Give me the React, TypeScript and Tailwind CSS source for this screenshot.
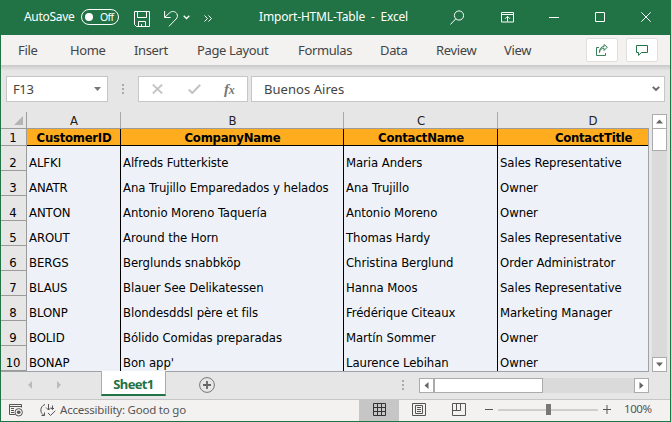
import type { ReactNode } from "react";

const ui = "font-['Noto_Sans','Open_Sans',sans-serif]";
const cellFont = "font-['DejaVu_Sans_Condensed','DejaVu_Sans',sans-serif] [font-stretch:condensed]";

const rows = [
  ["ALFKI", "Alfreds Futterkiste", "Maria Anders", "Sales Representative"],
  ["ANATR", "Ana Trujillo Emparedados y helados", "Ana Trujillo", "Owner"],
  ["ANTON", "Antonio Moreno Taquería", "Antonio Moreno", "Owner"],
  ["AROUT", "Around the Horn", "Thomas Hardy", "Sales Representative"],
  ["BERGS", "Berglunds snabbköp", "Christina Berglund", "Order Administrator"],
  ["BLAUS", "Blauer See Delikatessen", "Hanna Moos", "Sales Representative"],
  ["BLONP", "Blondesddsl père et fils", "Frédérique Citeaux", "Marketing Manager"],
  ["BOLID", "Bólido Comidas preparadas", "Martín Sommer", "Owner"],
  ["BONAP", "Bon app'", "Laurence Lebihan", "Owner"],
];

const columns = [
  { letter: "A", name: "CustomerID", width: "w-[94px]", pad: "pl-[1px]" },
  { letter: "B", name: "CompanyName", width: "w-[223px]", pad: "pl-[1px]" },
  { letter: "C", name: "ContactName", width: "w-[154px]", pad: "pl-[1px]" },
  { letter: "D", name: "ContactTitle", width: "w-[150px]", pad: "pl-[41px]" },
];

const menu = [
  { label: "File", width: "w-[52px]" },
  { label: "Home", width: "w-[64px]" },
  { label: "Insert", width: "w-[63px]" },
  { label: "Page Layout", width: "w-[101px]" },
  { label: "Formulas", width: "w-[82px]" },
  { label: "Data", width: "w-[56px]" },
  { label: "Review", width: "w-[68px]" },
  { label: "View", width: "w-[82px]" },
];

function Icon({ w, h, className = "", children }: { w: number; h: number; className?: string; children: ReactNode }) {
  return (
    <svg width={w} height={h} viewBox={`0 0 ${w} ${h}`} fill="none" stroke="currentColor" className={`block shrink-0 ${className}`}>
      {children}
    </svg>
  );
}

function TitleBar() {
  return (
    <div className={`flex h-[35px] items-start bg-[#217346] text-[12px] leading-[16px] text-white ${ui}`}>
      <span className="ml-[24px] mt-[9px] w-[57px] shrink-0 whitespace-nowrap tracking-[-0.3px]">AutoSave</span>
      <div className="mt-[9px] flex h-[16px] w-[38px] shrink-0 items-center rounded-full border border-white">
        <span className="ml-[3px] size-[8px] rounded-full bg-white" />
        <span className="ml-[7px] text-[10.5px] leading-[14px] tracking-[-0.7px]">Off</span>
      </div>
      <Icon w={16} h={16} className="ml-[15px] mt-[11px]">
        <path d="M.5.5h15v15H2.500l-2-2zM3.500.5v6h9v-6M4.500 15.500v-5h7v5M7.500 13v2.500" />
      </Icon>
      <Icon w={14} h={16} className="ml-[14px] mt-[11px]">
        <path d="M.6 0v6.500h6M.8 6.200 5.800 1.700C8.200-.3 11.400.4 12.700 2.500c1.300 2 .8 4-.6 5.500L5 15.300" />
      </Icon>
      <Icon w={7} h={5} className="ml-[5px] mt-[15px]"><path d="M.7.8 3.500 3.500 6.300.8" strokeWidth="1.300" /></Icon>
      <Icon w={8} h={7} className="ml-[14px] mt-[15px]"><path d="m.5.5 3 3-3 3M4.500.5l3 3-3 3" /></Icon>
      <span className="ml-[47px] mt-[9px] w-[191px] shrink-0 whitespace-pre tracking-[-0.17px]">Import-HTML-Table  -  Excel</span>
      <Icon w={14} h={15} className="mt-[10px]"><circle cx="9" cy="5.500" r="4.600" /><path d="M5.700 8.900.4 14.500" /></Icon>
      <Icon w={13} h={11} className="ml-[37px] mt-[12px]">
        <path d="M.5.5h12v9.500H.5zM.5 2.500h12M6.500 9.500v-5M4 6.800l2.500-2.500L9 6.800" />
      </Icon>
      <Icon w={10} h={11} className="ml-[35px] mt-[12px]"><path d="M0 5.500h10" /></Icon>
      <Icon w={10} h={10} className="ml-[36px] mt-[12px]"><path d="M.5.5h9v9h-9z" /></Icon>
      <Icon w={10} h={10} className="ml-[36px] mt-[12px]"><path d="m.3.300 9.400 9.400M9.700.3.3 9.700" /></Icon>
    </div>
  );
}

function MenuBar() {
  return (
    <div className={`flex h-[30px] items-start bg-[#f3f2f1] pl-[17px] text-[13px] leading-[18px] text-[#444] ${ui}`}>
      {menu.map((m) => (
        <span key={m.label} className={`mt-[6px] shrink-0 whitespace-nowrap tracking-[-0.36px] ${m.width}`}>{m.label}</span>
      ))}
      <button className="mt-[3px] flex h-[24px] w-[32px] shrink-0 items-center justify-center rounded-[2px] border border-[#e1dfdd] bg-white text-[#217346]">
        <Icon w={12} h={12}>
          <path d="M3 3.500H.5v8h9V9M3.500 8.500c.3-3 2-4.300 4.500-4.300V6.500l3.300-3.300L8 .500v2C5 2.600 3.300 5 3.500 8.500" strokeWidth=".9" />
        </Icon>
      </button>
      <button className="ml-[8px] mt-[3px] flex h-[24px] w-[32px] shrink-0 items-center justify-center rounded-[2px] border border-[#e1dfdd] bg-white text-[#217346]">
        <Icon w={12} h={11}><path d="M.5.5h11v7H5.500L2.500 10.300V7.500h-2z" /></Icon>
      </button>
    </div>
  );
}

function FormulaBar() {
  return (
    <div className={`flex h-[47px] items-start bg-gradient-to-b from-[#c9c9c9] via-[#e6e6e6] via-[12%] to-[#e6e6e6] pl-[5px] pt-[11px] text-[13px] text-[#444] ${ui}`}>
      <div className="flex h-[26px] w-[102px] shrink-0 items-center border border-[#c6c6c6] bg-white pl-[6px] pr-[6px]">
        <span className="pt-[2px] tracking-[-0.4px]">F13</span>
        <Icon w={7} h={4} className="ml-auto"><path d="M0 0h7L3.500 4z" fill="#777" stroke="none" /></Icon>
      </div>
      <Icon w={2} h={10} className="ml-[14px] mt-[8px]"><path d="M0 1h2M0 5h2M0 9h2" stroke="#aaa" strokeWidth="2" /></Icon>
      <div className="ml-[14px] flex h-[26px] w-[110px] shrink-0 items-center border border-[#c6c6c6] bg-white pl-[13px]">
        <Icon w={11} h={10}><path d="m.8.500 9.400 9M10.200.5.8 9.500" stroke="#c3c3c3" strokeWidth="1.800" /></Icon>
        <Icon w={13} h={10} className="ml-[25px]"><path d="m.8 5.500 3.500 3.500L12.200.8" stroke="#c3c3c3" strokeWidth="2" /></Icon>
        <span className="ml-[23px] font-['Liberation_Serif',serif] text-[15px] font-bold italic leading-[18px] tracking-[-0.3px] text-[#777]">f<span className="text-[12px]">x</span></span>
      </div>
      <div className="ml-[3px] flex h-[26px] w-[414px] shrink-0 items-center border border-[#c6c6c6] bg-white pl-[12px] pr-[4px]">
        <span className="pt-[2px] tracking-[0.05px]">Buenos Aires</span>
        <Icon w={8} h={6} className="ml-auto"><path d="m.8.800 3.200 3.200L7.200.8" stroke="#666" strokeWidth="1.900" /></Icon>
      </div>
    </div>
  );
}

function Grid() {
  return (
    <div className={`h-[260px] w-[648px] shrink-0 overflow-hidden border-b border-[#9fa3a8] text-[13px] leading-[14px] tracking-[-0.07px] text-black ${cellFont}`}>
      <div className="flex h-[17px] border-b border-[#9b9b9b]">
        <div className="flex w-[26px] shrink-0 items-end justify-end border-r border-[#9b9b9b] pb-[3px] pr-[3px]">
          <Icon w={9} h={9}><path d="M9 0v9H0z" fill="#b4b4b4" stroke="none" /></Icon>
        </div>
        {columns.map((c) => (
          <div key={c.letter} className={`shrink-0 border-r border-r-[#aaa] pl-[1px] pt-[2px] text-center text-[#222] last:border-r-0 last:pl-[40px] ${c.width}`}>{c.letter}</div>
        ))}
      </div>
      <div className="flex h-[17px]">
        <div className="w-[26px] shrink-0 border-b border-r border-[#9b9b9b] bg-[#e6e6e6] pr-[1px] pt-[2px] text-center">1</div>
        {columns.map((c) => (
          <div key={c.letter} className={`shrink-0 border-b border-r border-black bg-[#ffad1f] pt-[2px] text-center font-bold leading-[14px] tracking-[-0.27px] ${c.width} ${c.pad} ${c.letter === "D" ? "border-r-0" : ""}`}>{c.name}</div>
        ))}
        <div className="w-px shrink-0 bg-[#9fa3a8]" />
      </div>
      {rows.map((r, i) => (
        <div key={r[0]} className="flex h-[25px]">
          <div className="w-[26px] shrink-0 border-b border-r border-[#9b9b9b] bg-[#e6e6e6] pr-[1px] pt-[10px] text-center">{i + 2}</div>
          {r.map((v, j) => (
            <div key={columns[j].letter} className={`shrink-0 whitespace-nowrap border-r border-black bg-[#eef2f8] pl-[2px] pt-[10px] ${columns[j].width} ${j === 3 ? "border-r-0" : ""}`}>{v}</div>
          ))}
          <div className="w-px shrink-0 bg-[#9fa3a8]" />
        </div>
      ))}
    </div>
  );
}

function Arrow({ d }: { d: string }) {
  return <Icon w={7} h={7}><path d={d} fill="#666" stroke="none" /></Icon>;
}

function SheetTabs() {
  return (
    <div className="flex h-[27px] items-start bg-[#e6e6e6]">
      <Icon w={4} h={8} className="ml-[27px] mt-[9px]"><path d="M4 0v8L0 4z" fill="#bbb" stroke="none" /></Icon>
      <Icon w={4} h={8} className="ml-[25px] mt-[9px]"><path d="M0 0v8l4-4z" fill="#bbb" stroke="none" /></Icon>
      <div className={`-mt-px ml-[40px] h-[25px] w-[65px] shrink-0 border-x border-b-2 border-x-[#ababab] border-b-[#217346] bg-white pt-[4px] text-center text-[13px] font-bold leading-[18px] tracking-[-0.65px] text-[#217346] ${ui}`}>Sheet1</div>
      <Icon w={16} h={16} className="ml-[33px] mt-[5px]"><circle cx="8" cy="8" r="7.400" stroke="#777" /><path d="M8 4v8M4 8h8" stroke="#666" strokeWidth="1.800" /></Icon>
      <Icon w={2} h={10} className="ml-[187px] mt-[8px]"><path d="M0 1h2M0 5h2M0 9h2" stroke="#aaa" strokeWidth="2" /></Icon>
      <div className="ml-[15px] mt-[6px] flex h-[15px] w-[230px] shrink-0 bg-[#dadada]">
        <div className="flex w-[15px] items-center justify-center border border-[#ababab] bg-white"><Arrow d="M5.500 0v7L1.500 3.500z" /></div>
        <div className="w-[109px] border border-[#ababab] bg-white" />
        <div className="ml-auto flex w-[15px] items-center justify-center border border-[#ababab] bg-white"><Arrow d="M1.500 0v7l4-3.500z" /></div>
      </div>
    </div>
  );
}

function StatusBar() {
  return (
    <div className={`flex h-[22px] items-start border-t border-[#c6c6c6] bg-[#f3f2f1] text-[11.5px] leading-[16px] text-[#555] ${ui}`}>
      <Icon w={15} h={13} className="ml-[8px] mt-[4px]">
        <path d="M6 10.500H.5V.5h12v3M.5 2.500h12M2 4.500h3M2 6.500h3M2 8.500h3" stroke="#555" />
        <circle cx="9.700" cy="8.300" r="3.700" stroke="#555" /><circle cx="9.700" cy="8.300" r="1.800" fill="#555" stroke="none" />
      </Icon>
      <Icon w={16} h={14} className="ml-[16px] mt-[3px]">
        <path d="M5 1.500C2 2.500.5 5 .9 8c.3 2 1.600 3.700 3.300 4.500M1.500 12.500h3V9.500M8.500 1v6M6 4.500l2.500 2.500L11 4.500M8 10l2.500 2.500L15.300 7.800M12.500 2.500v4M11 5l1.500 1.500L14 5" stroke="#555" />
      </Icon>
      <span className="ml-[4px] mt-[2px] w-[299px] shrink-0 whitespace-nowrap tracking-[-0.22px]">Accessibility: Good to go</span>
      <div className="flex h-[21px] w-[40px] shrink-0 justify-center bg-[#c6c6c6] pt-[3px]">
        <Icon w={13} h={13}><path d="M.5.500h12v12H.5zM.5 4.500h12M.5 8.500h12M4.500.500v12M8.500.500v12" stroke="#333" /></Icon>
      </div>
      <Icon w={14} h={13} className="ml-[13px] mt-[3px]"><path d="M.5.5h13v12H.5zM3.500 2.500h7v8h-7zM5 4.500h4M5 6.500h4M5 8.500h4" stroke="#555" /></Icon>
      <Icon w={14} h={13} className="ml-[26px] mt-[3px]"><path d="M.5.500h13v12H.5zM4.500.500v7M8.500.500v7M.5 7.500h8" stroke="#555" /></Icon>
      <Icon w={8} h={9} className="ml-[19px] mt-[5px]"><path d="M0 4.500h8" stroke="#555" /></Icon>
      <Icon w={100} h={11} className="ml-[5px] mt-[4px]"><path d="M0 6h100" stroke="#aaa" /><path d="M48 0h5v11h-5z" fill="#777" stroke="none" /></Icon>
      <Icon w={8} h={9} className="ml-[5px] mt-[5px]"><path d="M0 4.500h8M4 0v9" stroke="#555" /></Icon>
      <span className="ml-[13px] mt-[1px] tracking-[-0.45px]">100%</span>
    </div>
  );
}

export default function App() {
  return (
    <div className="h-[422px] w-[671px] overflow-hidden border-b border-[#217346] bg-[#217346]">
      <TitleBar />
      <div className="mx-px bg-[#e6e6e6]">
        <MenuBar />
        <FormulaBar />
        <div className="flex h-[260px]">
          <Grid />
          <div className="ml-[3px] mt-[2px] flex h-[258px] w-[15px] flex-col bg-[#dadada]">
            <div className="flex h-[15px] items-center justify-center border border-[#ababab] bg-white"><Arrow d="M0 5.500h7L3.500 1.500z" /></div>
            <div className="h-[22px] border border-t-0 border-[#ababab] bg-white" />
            <div className="mt-auto flex h-[15px] items-center justify-center border border-[#ababab] bg-white"><Arrow d="M0 1.500h7L3.500 5.500z" /></div>
          </div>
        </div>
        <SheetTabs />
        <StatusBar />
      </div>
    </div>
  );
}
